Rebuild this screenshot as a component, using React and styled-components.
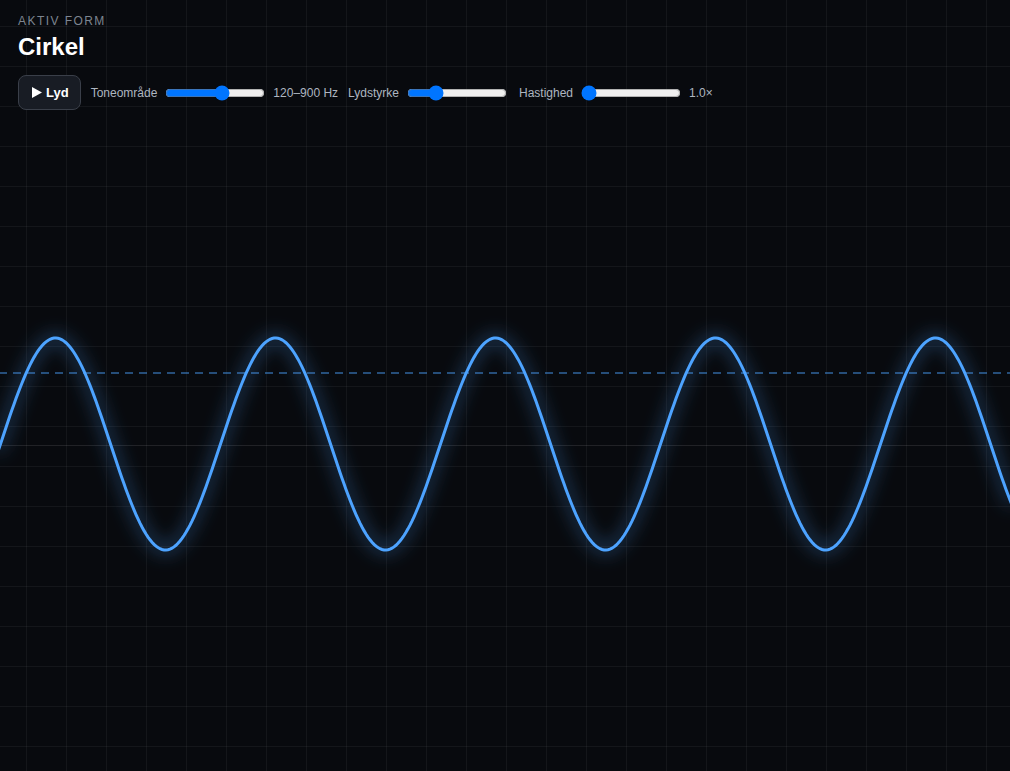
import React from 'react';
import styled, { createGlobalStyle } from 'styled-components';

const WIDTH = 1010;
const HEIGHT = 771;
const CENTER_Y = 444;
const AMPLITUDE = 106;
const PERIOD = 220;
const PEAK_X = 55.5;

const GlobalStyle = createGlobalStyle`
  html, body {
    margin: 0;
    height: 100%;
    background: #080a0e;
    overflow: hidden;
  }
`;

const Page = styled.div`
  position: relative;
  width: 100vw;
  height: 100vh;
  font-family: "Liberation Sans", Arial, sans-serif;
  color: #fff;
`;

const Scope = styled.svg`
  position: absolute;
  inset: 0;
  display: block;
`;

const Header = styled.header`
  position: relative;
  display: flex;
  flex-direction: column;
  padding: 14px 18px;
`;

const Eyebrow = styled.div`
  font-size: 12px;
  line-height: 14px;
  letter-spacing: 1.44px;
  color: #7d8590;
`;

const Title = styled.h1`
  margin: 5px 0 0;
  font-size: 24px;
  line-height: 28px;
  font-weight: 700;
`;

const Controls = styled.div`
  display: flex;
  align-items: center;
  gap: 10px;
  margin-top: 14px;
`;

const SoundButton = styled.button`
  display: inline-flex;
  align-items: center;
  gap: 4px;
  height: 35px;
  padding: 0 11px 0 13px;
  border: 1px solid #3a3f49;
  border-radius: 8px;
  background: #181c24;
  color: #fff;
  font-family: inherit;
  font-size: 13px;
  font-weight: 700;
`;

const PlayIcon = styled.svg`
  display: block;
  fill: currentColor;
`;

const Group = styled.label`
  display: flex;
  align-items: center;
  gap: 6px;
  font-size: 12px;
  color: #aeb6c0;
`;

const Slider = styled.input`
  width: 100px;
  accent-color: #0075ff;
`;

const wavePath = () => {
  const points = [];
  for (let x = -2; x <= WIDTH + 2; x += 2) {
    const y = CENTER_Y - AMPLITUDE * Math.cos((2 * Math.PI * (x - PEAK_X)) / PERIOD);
    points.push(`${x},${y.toFixed(2)}`);
  }
  return `M${points.join('L')}`;
};

const gridLines = (start, end) => {
  const out = [];
  for (let p = start; p < end; p += 40) out.push(p);
  return out;
};

const App = () => {
  return (
    <Page>
      <GlobalStyle />
      <Scope width={WIDTH} height={HEIGHT} viewBox={`0 0 ${WIDTH} ${HEIGHT}`}>
        <defs>
          <filter id="glow" x="-10%" y="-30%" width="120%" height="160%">
            <feGaussianBlur stdDeviation="9" />
          </filter>
        </defs>
        {gridLines(26, WIDTH).map((x) => (
          <line key={x} x1={x + 0.5} x2={x + 0.5} y1="0" y2={HEIGHT} stroke="#fff" strokeOpacity="0.05" />
        ))}
        {gridLines(26, HEIGHT).map((y) => (
          <line key={y} x1="0" x2={WIDTH} y1={y + 0.5} y2={y + 0.5} stroke="#fff" strokeOpacity="0.05" />
        ))}
        <line x1="0" x2={WIDTH} y1="445.5" y2="445.5" stroke="#fff" strokeOpacity="0.1" />
        <line x1="0" x2={WIDTH} y1="373" y2="373" stroke="#4da3ff" strokeOpacity="0.6" strokeWidth="1.5" strokeDasharray="8 6" strokeDashoffset="1" />
        <path d={wavePath()} fill="none" stroke="#4da3ff" strokeWidth="3" filter="url(#glow)" />
        <path d={wavePath()} fill="none" stroke="#4da3ff" strokeWidth="3" />
      </Scope>
      <Header>
        <Eyebrow>AKTIV FORM</Eyebrow>
        <Title>Cirkel</Title>
        <Controls>
          <SoundButton>
            <PlayIcon width="10" height="11" viewBox="0 0 10 11">
              <polygon points="0,0 10,5.5 0,11" />
            </PlayIcon>
            Lyd
          </SoundButton>
          <Group>
            Toneområde
            <Slider type="range" min="0" max="100" defaultValue="58" />
            <span>120–900 Hz</span>
          </Group>
          <Group>
            Lydstyrke
            <Slider type="range" min="0" max="100" defaultValue="25" />
          </Group>
          <Group>
            Hastighed
            <Slider type="range" min="0" max="100" defaultValue="0" />
            <span>1.0×</span>
          </Group>
        </Controls>
      </Header>
    </Page>
  );
};

export default App;
